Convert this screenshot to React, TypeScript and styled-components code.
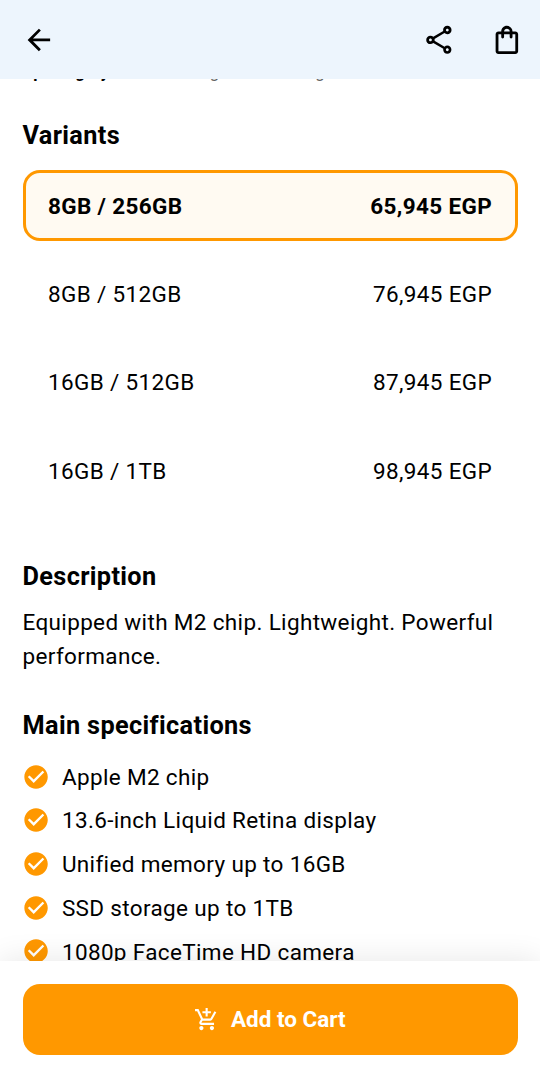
import React from "react";
import styled, { createGlobalStyle } from "styled-components";
import {
  MdArrowBack,
  MdOutlineShare,
  MdOutlineShoppingBag,
  MdCheckCircle,
  MdOutlineAddShoppingCart,
} from "react-icons/md";

const GlobalStyle = createGlobalStyle`
  * { box-sizing: border-box; }
  body { margin: 0; background: #fff; }
`;

const Screen = styled.div`
  display: flex;
  flex-direction: column;
  width: 540px;
  height: 1078px;
  overflow: hidden;
  background: #fff;
  color: #000;
  font-family: Roboto, "Liberation Sans", sans-serif;
  font-size: 22.5px;
  letter-spacing: 0.35px;
`;

const TopBar = styled.header`
  flex: none;
  height: 79px;
  padding: 0 16.4px 0 22.4px;
  display: flex;
  align-items: center;
  background: #edf5fd;
`;

const IconButton = styled.button<{ $gap?: number }>`
  display: flex;
  padding: 0;
  border: 0;
  background: none;
  color: #000;
  font-size: 33.75px;
  margin-left: ${(p) => p.$gap ?? 0}px;
`;

const Spacer = styled.div`
  flex: 1;
`;

const Content = styled.main`
  flex: 1;
  min-height: 0;
  overflow: hidden;
  padding: 0 22.5px;
`;

const ColorRow = styled.div`
  display: flex;
  height: 28.5px;
  margin-top: -22.5px;
  font-size: 16.9px;
  line-height: 30px;
  letter-spacing: 0.28px;
  white-space: nowrap;
`;

const ColorName = styled.span<{ $width: number; $selected?: boolean }>`
  flex: none;
  width: ${(p) => p.$width}px;
  color: ${(p) => (p.$selected ? "#000" : "#616161")};
  font-weight: ${(p) => (p.$selected ? 700 : 400)};
`;

const Heading = styled.h2<{ $top: number }>`
  margin: ${(p) => p.$top}px 0 0;
  font-size: 25.3px;
  line-height: 34px;
  font-weight: 700;
`;

const VariantList = styled.div`
  display: flex;
  flex-direction: column;
  gap: 17.2px;
  margin-top: 17px;
`;

const Variant = styled.div<{ $selected?: boolean }>`
  display: flex;
  justify-content: space-between;
  align-items: center;
  height: 71.2px;
  padding: 0 22.5px;
  border: 3px solid ${(p) => (p.$selected ? "#ff9800" : "transparent")};
  border-radius: 17px;
  background: ${(p) => (p.$selected ? "#fffaf2" : "transparent")};
  font-weight: ${(p) => (p.$selected ? 700 : 400)};
`;

const Description = styled.p`
  margin: 12px 0 0;
  line-height: 33.5px;
`;

const SpecList = styled.ul`
  list-style: none;
  margin: 12.1px 0 0;
  padding: 0;
`;

const Spec = styled.li`
  display: flex;
  align-items: center;
  height: 43.7px;
  gap: 11.7px;
  margin-left: -0.4px;
  white-space: nowrap;

  svg {
    color: #ff9800;
    font-size: 28.1px;
  }
`;

const BottomBar = styled.footer`
  flex: none;
  position: relative;
  height: 117px;
  padding: 22.5px;
  background: #fff;
  box-shadow: 0 -2px 28px rgba(0, 0, 0, 0.09);
`;

const CartButton = styled.button`
  display: flex;
  align-items: center;
  justify-content: center;
  gap: 11.3px;
  width: 100%;
  height: 71.6px;
  padding: 0;
  border: 0;
  border-radius: 17px;
  background: #ff9800;
  color: #fff;
  font: 700 22.5px Roboto, sans-serif;

  svg {
    font-size: 25.3px;
  }
`;

const colors = [
  { name: "Space gray", width: 144 },
  { name: "Midnight", width: 108.5 },
  { name: "Starlight", width: 108.5 },
];

const variants = [
  { name: "8GB / 256GB", price: "65,945 EGP" },
  { name: "8GB / 512GB", price: "76,945 EGP" },
  { name: "16GB / 512GB", price: "87,945 EGP" },
  { name: "16GB / 1TB", price: "98,945 EGP" },
];

const specs = [
  "Apple M2 chip",
  "13.6-inch Liquid Retina display",
  "Unified memory up to 16GB",
  "SSD storage up to 1TB",
  "1080p FaceTime HD camera",
];

export default function App() {
  return (
    <>
      <GlobalStyle />
      <Screen>
        <TopBar>
          <IconButton aria-label="Back"><MdArrowBack /></IconButton>
          <Spacer />
          <IconButton aria-label="Share"><MdOutlineShare /></IconButton>
          <IconButton aria-label="Cart" $gap={33.75}><MdOutlineShoppingBag /></IconButton>
        </TopBar>
        <Content>
          <ColorRow>
            {colors.map((c, i) => (
              <ColorName key={c.name} $width={c.width} $selected={i === 0}>{c.name}</ColorName>
            ))}
          </ColorRow>
          <Heading $top={34}>Variants</Heading>
          <VariantList>
            {variants.map((v, i) => (
              <Variant key={v.name} $selected={i === 0}>
                <span>{v.name}</span>
                <span>{v.price}</span>
              </Variant>
            ))}
          </VariantList>
          <Heading $top={54}>Description</Heading>
          <Description>Equipped with M2 chip. Lightweight. Powerful performance.</Description>
          <Heading $top={35.5}>Main specifications</Heading>
          <SpecList>
            {specs.map((s) => (
              <Spec key={s}><MdCheckCircle />{s}</Spec>
            ))}
          </SpecList>
        </Content>
        <BottomBar>
          <CartButton><MdOutlineAddShoppingCart />Add to Cart</CartButton>
        </BottomBar>
      </Screen>
    </>
  );
}
